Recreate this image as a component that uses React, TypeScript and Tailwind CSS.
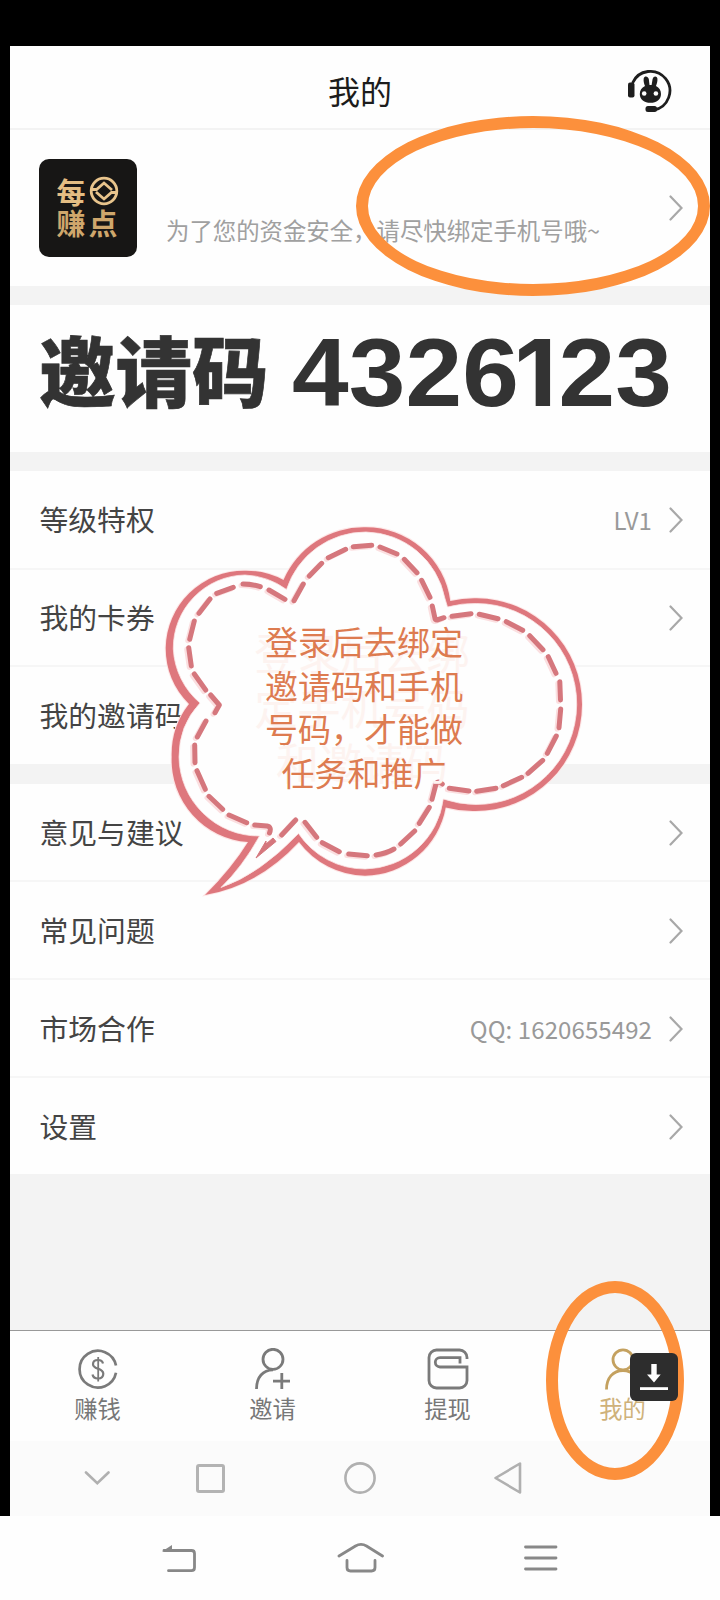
import type { ReactNode } from "react";
import clsx from "clsx";

type Row = { label: string; value?: string; arrow?: boolean };

const accountRows: Row[] = [
  { label: "等级特权", value: "LV1" },
  { label: "我的卡券" },
  { label: "我的邀请码", arrow: false },
];

const supportRows: Row[] = [
  { label: "意见与建议" },
  { label: "常见问题" },
  { label: "市场合作", value: "QQ: 1620655492" },
  { label: "设置" },
];

function Chevron() {
  return (
    <svg width="14" height="26" viewBox="0 0 14 26" fill="none" stroke="#a8a8a8" strokeWidth="2.2" strokeLinecap="round">
      <path d="M1.5 1.5 L12.5 13 L1.5 24.5" />
    </svg>
  );
}

function RowList({ rows }: { rows: Row[] }) {
  return (
    <ul className="divide-y-2 divide-[#f6f6f6] bg-[#fefefe]">
      {rows.map((row) => (
        <li key={row.label} className="flex h-[97.6px] items-center pt-[2px] pr-[27px] pl-[29.5px] first:h-[98.6px] last:h-[96.6px]">
          <span className="-mt-[3px] text-[28.8px] text-[#444]">{row.label}</span>
          {row.value && <span className="ml-auto pr-[17px] text-[24px] tracking-[0.1px] text-[#999]">{row.value}</span>}
          {row.arrow !== false && (
            <span className={clsx(!row.value && "ml-auto")}>
              <Chevron />
            </span>
          )}
        </li>
      ))}
    </ul>
  );
}

function SupportIcon() {
  return (
    <svg width="44" height="44" viewBox="0 0 44 44" fill="#1e1e1e">
      <path d="M4.5 14 A19.5 19.5 0 1 1 26 41" fill="none" stroke="#1e1e1e" strokeWidth="2.8" />
      <rect x="0" y="13.5" width="6.5" height="15" rx="2" />
      <rect x="17.5" y="37" width="11.5" height="6" rx="2.5" />
      <path d="M15.7 9.5 C16.5 6.5 20 7 20.8 10 L21.5 16 L23.6 16 L24.6 10 C25.5 6.5 29 6.8 29.4 9.5 C29.7 12 28.8 15 28 17 C31.3 18.6 33 21.5 33 25 C33 30.5 28.5 33.8 22.5 33.8 C16.3 33.8 11.8 30.5 11.8 25 C11.8 21.5 13.6 18.6 17 17 C16 14.5 15.3 12 15.7 9.5 Z" />
      <circle cx="16.2" cy="24.5" r="2.3" fill="#fff" />
      <circle cx="27.9" cy="24.5" r="2.3" fill="#fff" />
    </svg>
  );
}

function Avatar() {
  return (
    <div className="grid h-[98px] w-[98px] grid-cols-[28px_28px] grid-rows-[31px_31px] place-content-center items-center gap-x-[4px] rounded-[10px] bg-[#171615] pr-[3px] pb-[3px] text-[29px] leading-none font-bold text-[#e3bd83]">
      <span>每</span>
      <svg width="30" height="30" viewBox="0 0 30 30" fill="none" stroke="#e8c48c" strokeWidth="2.8">
        <circle cx="15" cy="15" r="12.8" />
        <path d="M2.5 13.5 H7.5 L15 7 L23 14" />
        <path d="M27.5 16.5 H22.5 L15 23 L7 16" />
        <path d="M15 12 L18 15 L15 18 L12 15 Z" fill="#171615" stroke="none" />
      </svg>
      <span className="text-[#cfa76c]">赚</span>
      <span className="text-[#cfa76c]">点</span>
    </div>
  );
}

function EarnIcon() {
  return (
    <svg width="42" height="42" viewBox="0 0 42 42" fill="none" stroke="#7a7a7a" strokeWidth="2.7">
      <path d="M39 17.5 A18.4 18.4 0 1 0 39 24.8" />
      <path d="M26 15.5 C25.5 13 23.5 12 21 12 C18 12 16 13.6 16 16.2 C16 21.8 26.3 19.5 26.3 25.8 C26.3 28.8 24 30.5 21 30.5 C18 30.5 16 29 15.5 26.5" strokeWidth="2.2" />
      <path d="M21.2 9 V33.5" strokeWidth="1.8" />
    </svg>
  );
}

function InviteIcon() {
  return (
    <svg width="42" height="42" viewBox="0 0 42 42" fill="none" stroke="#7a7a7a" strokeWidth="2.8">
      <circle cx="21" cy="11.3" r="10" />
      <path d="M4.5 41 C4.5 29 11 22 21 21.8" />
      <path d="M21 33.2 H38 M29.8 25 V41" />
    </svg>
  );
}

function WithdrawIcon() {
  return (
    <svg width="42" height="42" viewBox="0 0 42 42" fill="none" stroke="#7a7a7a" strokeWidth="2.8">
      <path d="M40 11 V9.5 A7.5 7.5 0 0 0 32.5 2 H9.5 A7.5 7.5 0 0 0 2 9.5 V32.5 A7.5 7.5 0 0 0 9.5 40 H32.5 A7.5 7.5 0 0 0 40 32.5 V19 H13 A4.7 4.7 0 0 1 13 9.6 H33 V15.5" />
    </svg>
  );
}

function MineIcon() {
  return (
    <svg width="42" height="42" viewBox="0 0 42 42" fill="none" stroke="#c4a15f" strokeWidth="2.8">
      <circle cx="21" cy="11.8" r="10" />
      <path d="M4.5 41.5 C4.5 30 11 22.5 21 22.5 C31 22.5 37.5 30 37.5 41.5" />
    </svg>
  );
}

function Tab({ icon, label, active }: { icon: ReactNode; label: string; active?: boolean }) {
  return (
    <div className="flex flex-1 flex-col items-center pt-[17px]">
      {icon}
      <span className={clsx("text-[23.3px] leading-[36px]", active ? "text-[#cfb27a]" : "text-[#777]")}>{label}</span>
    </div>
  );
}

const stitches = [
  "M285 599.3L269 590", "M260.3 586.7Q252 584 243 584", "M233.3 587.3L216.7 593.3", "M210 599L199 613.3",
  "M194.3 621L189.7 639.3", "M188.7 647.7L191.3 666", "M194.3 674L205.7 690", "M210.7 695L219.3 705L215 712.7",
  "M206 721L197.3 737", "M194.7 745L195 762.7", "M197 770.7L205.3 789.3", "M209 796.3L222.7 809.3",
  "M229 815L246.7 822.7", "M254.7 825L267 826Q272 827 269.5 833", "M281.7 835L295.7 820",
  "M305 822.3L316.7 837.3", "M322.3 842.7L339.3 851.7", "M348.7 854L367.3 855.7", "M376 855Q386 853.5 394 849",
  "M400.7 844L414.7 831", "M419.3 823.3L429.3 807.3", "M432 799.3L436 784Q438 780 442.3 784", "M449.3 788.3L469 791",
  "M476.7 791.3L496 788.3", "M503.3 785.7L521.7 777.3", "M528 773.3L542.7 760.3", "M547.3 753.3L556.3 736",
  "M559 727.7L560.7 709", "M560.5 700L559.8 681.7", "M556 673.3L548.3 656.7", "M543 649.7L529.7 635.7",
  "M522.7 630.3L506.3 621.7", "M498 618.7L479.3 614.3", "M471 613.7L452 616.3", "M444 617.7L437 620Q435 620 434.7 617L432.3 606",
  "M430 597.3L421.7 580.3", "M417 572.7L404.3 559.3", "M397 554L380 547", "M371.7 545.3L353.3 546.7",
  "M345.7 549.3L328.3 557.7", "M321.7 563.3L309.3 576", "M303.3 584L294 600.7",
].join("");

const bubbleOuter = [
  "M189 704 A80 80 0 0 1 165.7 648 A78.5 78.5 0 0 1 245 570.7 A80 80 0 0 1 283.5 580",
  "A87 87 0 0 1 365 527.3 A85 85 0 0 1 450.3 601",
  "A106 106 0 0 1 476.7 598.3 A106 106 0 0 1 582 704.5 A106.5 106.5 0 0 1 474 811 A106 106 0 0 1 445.7 807.5",
  "A83 83 0 0 1 365 875.7 A84 84 0 0 1 299 842",
  "Q258 886 205 895 Q232 868 248 842",
  "A82 82 0 0 1 171.7 757 A82 82 0 0 1 189 704 Z",
].join(" ");

const bubbleInner = [
  "M200 703 A76 76 0 0 1 173.3 649 A73 73 0 0 1 245 575 A76 76 0 0 1 286.5 589.5",
  "A83 83 0 0 1 366 532 A82 82 0 0 1 444.8 598 L447.5 607",
  "A101 101 0 0 1 476.7 603.5 A100.5 100.5 0 0 1 576.7 704.5 A100.5 100.5 0 0 1 476 804.5 A101 101 0 0 1 443.3 799",
  "A80 80 0 0 1 365 869 A80 80 0 0 1 298.5 833.5",
  "Q260 874 221 887.5 Q243 866 259.5 836",
  "A80 80 0 0 1 179 757 A78 78 0 0 1 200 703 Z",
].join(" ");

function SpeechBubble() {
  return (
    <div className="absolute top-[515px] left-[155px] h-[390px] w-[440px]">
      <svg className="absolute inset-0" width="440" height="390" viewBox="155 515 440 390">
        <path d={bubbleOuter} fill="#fde6e6" stroke="#fde6e6" strokeWidth="2" />
        <path d={bubbleOuter} fill="#de777d" />
        <path d={bubbleInner} fill="#fefefe" stroke="#fbe3e3" strokeWidth="0.8" />
        <g fill="none" strokeLinecap="round" strokeLinejoin="round">
          <path d={stitches} stroke="#fbdfe0" strokeWidth="5" transform="translate(-2 1.5)" />
          <path d={stitches} stroke="#d5777d" strokeWidth="5" />
        </g>
        <path d="M266 841 L256 858 L276 841.5 L273 838 L266 844 Z" fill="#d5777d" stroke="#d5777d" strokeLinejoin="round" />
      </svg>
      <p className="absolute top-[109px] left-0 w-[414px] text-center text-[43px] leading-[55px] text-[#fdf3f0]">
        登录后去绑<br />定手机号码<br />和邀请码
      </p>
      <p className="absolute top-[105px] left-0 w-[418px] text-center text-[33px] leading-[43.6px] text-[#dd7b50]">
        登录后去绑定<br />邀请码和手机<br />号码，才能做<br />任务和推广
      </p>
    </div>
  );
}

export default function App() {
  return (
    <div className="relative h-[1600px] w-[720px] overflow-hidden bg-[#fefefe] font-['Noto_Sans_CJK_SC',sans-serif]">
      <div className="flex h-[1516px] flex-col bg-black px-[10px] pt-[46px]">
        <header className="flex h-[84px] items-center justify-center border-b-2 border-[#f3f3f3] bg-[#fefefe]">
          <div className="flex-1 pl-[38px]" />
          <h1 className="pt-[5px] text-[32px] text-[#1c1c1c]">我的</h1>
          <div className="flex flex-1 justify-end pt-[7px] pr-[38px]">
            <SupportIcon />
          </div>
        </header>

        <section className="flex h-[156px] items-center bg-[#fefefe] pr-[27px] pl-[29px]">
          <Avatar />
          <p className="mt-[45px] ml-[29px] text-[23.4px] whitespace-nowrap text-[#a0a0a0]">为了您的资金安全，请尽快绑定手机号哦~</p>
          <div className="ml-auto">
            <Chevron />
          </div>
        </section>

        <div className="h-[19px] bg-[#f3f3f3]" />
        <section className="flex h-[147px] items-start bg-[#fefefe] pl-[29px] whitespace-nowrap text-[#333]">
          <span className="pt-[7px] text-[76.5px] leading-[112px] font-black [-webkit-text-stroke:0.7px_#333]">邀请码</span>
          <span className="ml-[23px] origin-left scale-x-[1.05] pt-[12px] font-['Liberation_Sans'] text-[97px] leading-[112px] font-bold tracking-[0.1px]">
            4326<span className="mr-[2px] -ml-[4px] font-[Inter] text-[92px] tracking-normal">1</span>23
          </span>
        </section>
        <div className="h-[19px] bg-[#f3f3f3]" />

        <RowList rows={accountRows} />
        <div className="h-[20px] bg-[#f3f3f3]" />
        <RowList rows={supportRows} />
        <div className="flex-1 bg-[#f3f3f3]" />

        <nav className="flex h-[111px] border-t border-[#999] bg-[#fefefe]">
          <Tab icon={<EarnIcon />} label="赚钱" />
          <Tab icon={<InviteIcon />} label="邀请" />
          <Tab icon={<WithdrawIcon />} label="提现" />
          <Tab icon={<MineIcon />} label="我的" active />
        </nav>

        <div className="flex h-[75px] items-center bg-[#fbfbfb] pb-[1px] pl-[74px]">
          <svg width="26" height="14" viewBox="0 0 26 14" fill="none" stroke="#b0b0b0" strokeWidth="2.6" strokeLinecap="round">
            <path d="M2 1.5 L13.3 12.2 L24.5 1.5" />
          </svg>
          <div className="ml-[86px] h-[29px] w-[29px] rounded-[3px] border-3 border-[#b3b3b3]" />
          <svg className="ml-[119px]" width="32" height="32" viewBox="0 0 32 32" fill="none" stroke="#b0b0b0" strokeWidth="2.6">
            <circle cx="16" cy="16" r="14.6" />
          </svg>
          <svg className="ml-[117px]" width="30" height="34" viewBox="0 0 30 34" fill="none" stroke="#b0b0b0" strokeWidth="2.6" strokeLinejoin="round">
            <path d="M27 2.5 V31.5 L2.5 17 Z" />
          </svg>
        </div>
      </div>

      <div className="flex h-[84px] items-center bg-[#fefefe] pl-[161px]">
        <svg width="36" height="30" viewBox="0 0 36 30" fill="none" stroke="#888" strokeWidth="2.8" strokeLinecap="round">
          <path d="M3 7.5 H30.5 Q33.5 7.5 33.5 10.5 V24.5 Q33.5 27.7 30.5 27.7 H7.5" />
          <path d="M1 8.5 L11 2 V8.5 Z" fill="#888" stroke="none" />
        </svg>
        <svg className="ml-[139px]" width="50" height="32" viewBox="0 0 50 32" fill="none" stroke="#888" strokeWidth="2.8" strokeLinecap="round">
          <path d="M3 14 L19.5 4 Q25 0.8 30.5 4 L46.5 14" />
          <path d="M11 18.5 V25.5 Q11 29 14.5 29 H35.5 Q39 29 39 25.5 V18.5" />
        </svg>
        <svg className="ml-[138px]" width="34" height="28" viewBox="0 0 34 28" fill="none" stroke="#888" strokeWidth="2.8" strokeLinecap="round">
          <path d="M1.5 3 H32 M1.5 14 H32 M1.5 25 H32" />
        </svg>
      </div>

      <SpeechBubble />

      <div className="absolute top-[116px] left-[356px] h-[180px] w-[354px] rounded-[50%] border-[12px] border-[#fc903c]" />
      <div className="absolute top-[1281px] left-[546px] h-[199px] w-[138px] rounded-[50%] border-[12px] border-[#fc903c]" />
      <div className="absolute top-[1353px] left-[630px] rounded-[6px] bg-[#2d2d2d]">
        <svg width="48" height="48" viewBox="0 0 48 48" fill="#fff">
          <path d="M21.3 11 H26.7 V21.5 H30.7 L24 29.5 L17 21.5 H21.3 Z" />
          <path d="M10 34.2 H38 V37 H10 Z" />
        </svg>
      </div>
    </div>
  );
}
